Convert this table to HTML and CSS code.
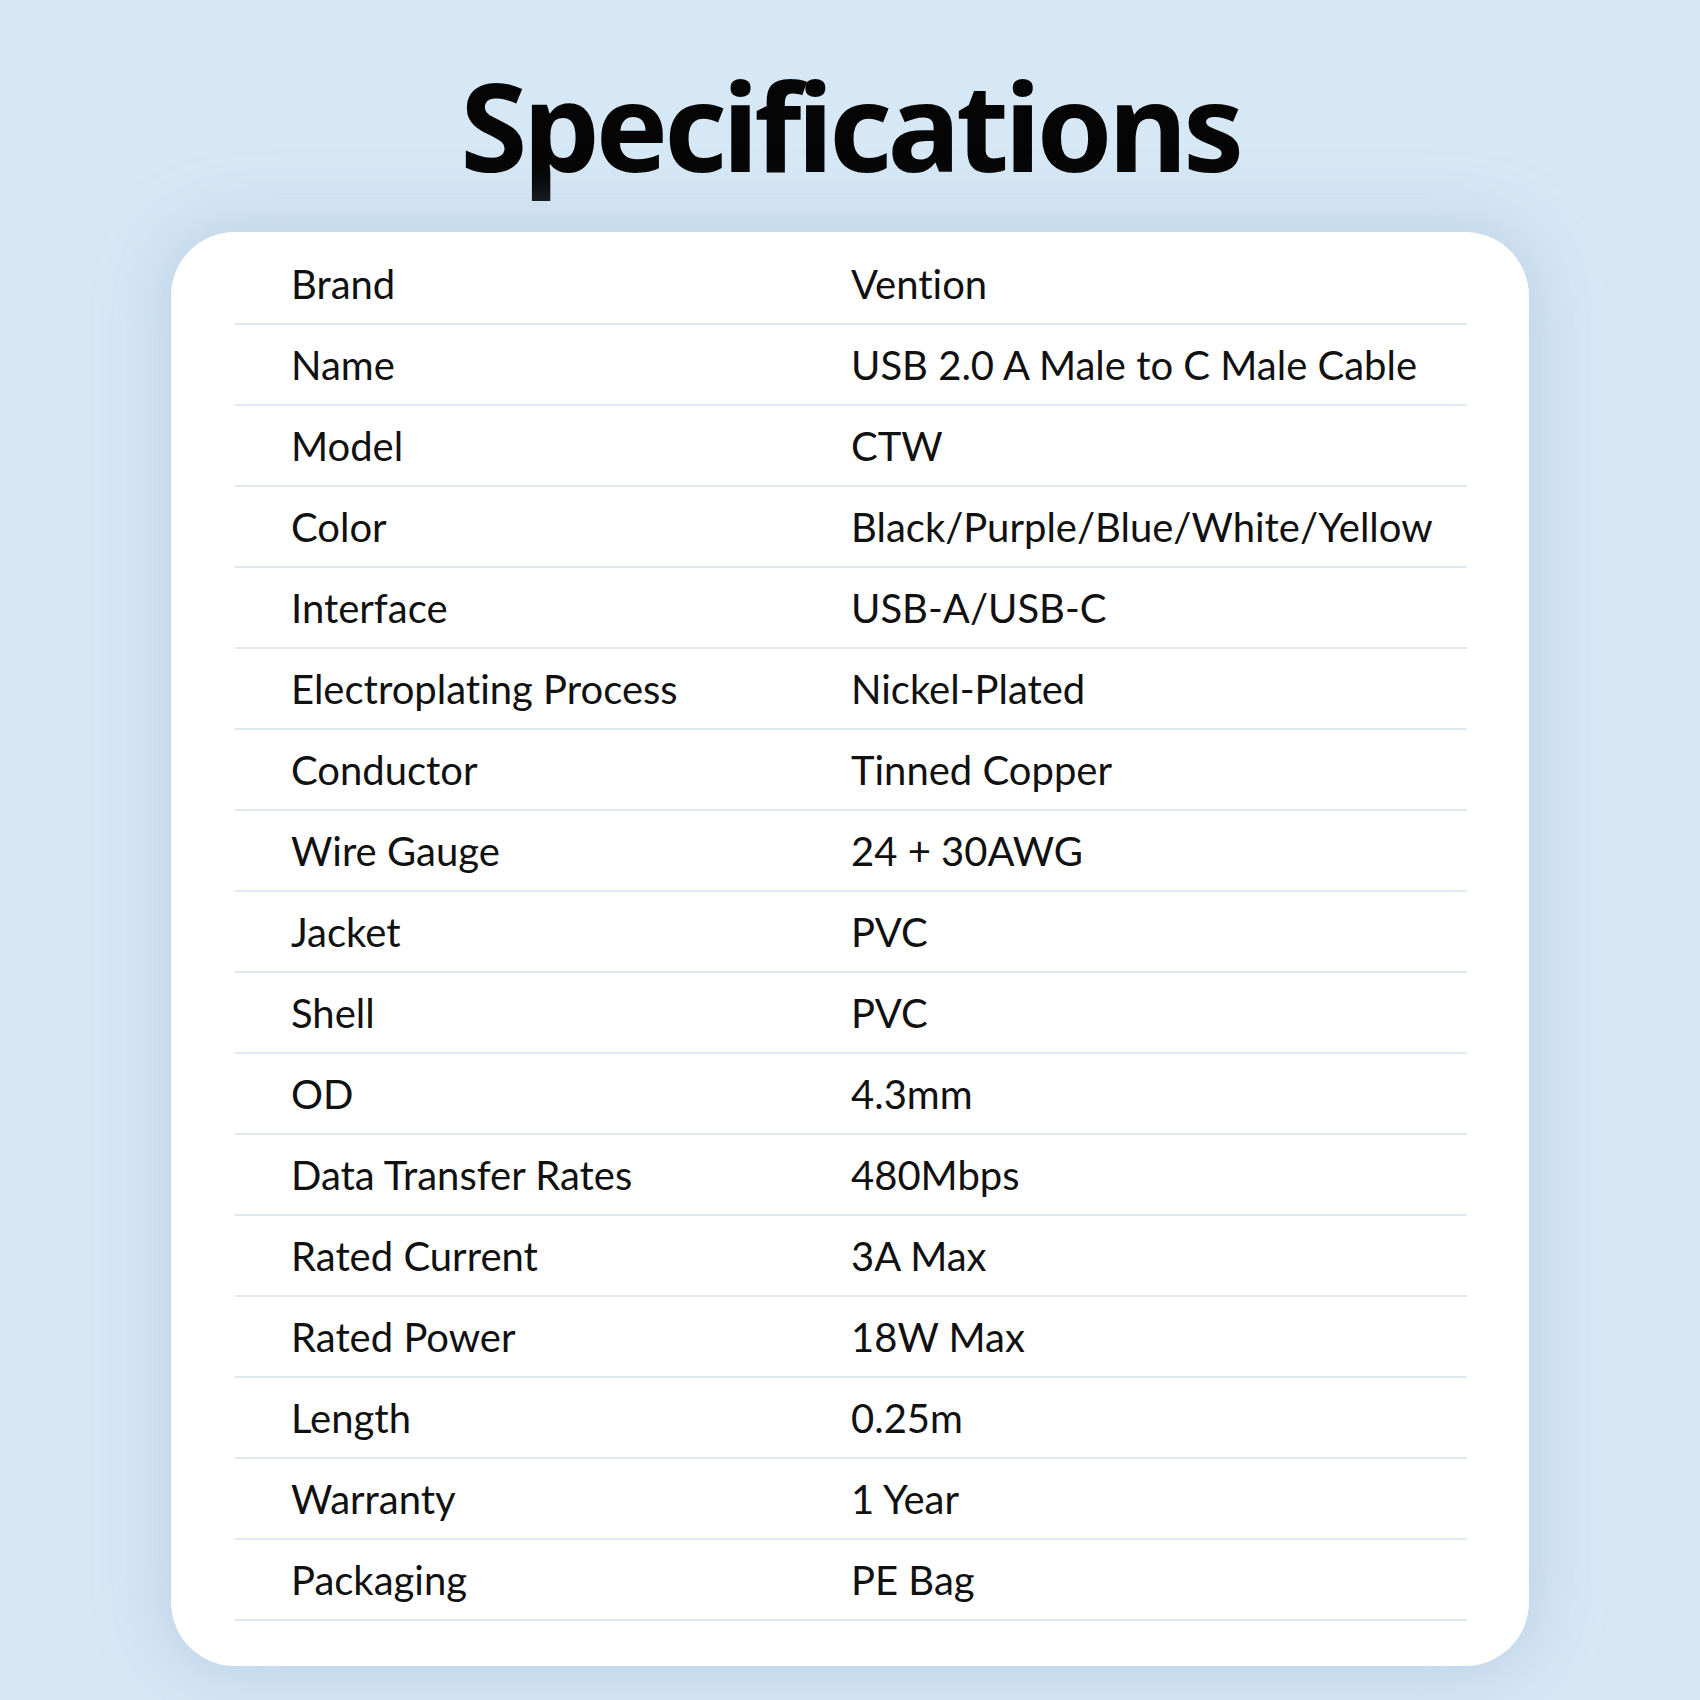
FILE: index.html
```html
<!DOCTYPE html>
<html lang="en">
<head>
<meta charset="utf-8">
<title>Specifications</title>
<link rel="stylesheet" href="styles.css">
</head>
<body>
<main class="page">
  <h1 class="title">Specifications</h1>
  <section class="card">
    <div class="row"><span class="label">Brand</span><span class="value">Vention</span></div>
    <div class="row"><span class="label">Name</span><span class="value">USB 2.0 A Male to C Male Cable</span></div>
    <div class="row"><span class="label">Model</span><span class="value">CTW</span></div>
    <div class="row"><span class="label">Color</span><span class="value">Black/Purple/Blue/White/Yellow</span></div>
    <div class="row"><span class="label">Interface</span><span class="value">USB-A/USB-C</span></div>
    <div class="row"><span class="label">Electroplating Process</span><span class="value">Nickel-Plated</span></div>
    <div class="row"><span class="label">Conductor</span><span class="value">Tinned Copper</span></div>
    <div class="row"><span class="label">Wire Gauge</span><span class="value">24 + 30AWG</span></div>
    <div class="row"><span class="label">Jacket</span><span class="value">PVC</span></div>
    <div class="row"><span class="label">Shell</span><span class="value">PVC</span></div>
    <div class="row"><span class="label">OD</span><span class="value">4.3mm</span></div>
    <div class="row"><span class="label">Data Transfer Rates</span><span class="value">480Mbps</span></div>
    <div class="row"><span class="label">Rated Current</span><span class="value">3A Max</span></div>
    <div class="row"><span class="label">Rated Power</span><span class="value">18W Max</span></div>
    <div class="row"><span class="label">Length</span><span class="value">0.25m</span></div>
    <div class="row"><span class="label">Warranty</span><span class="value">1 Year</span></div>
    <div class="row"><span class="label">Packaging</span><span class="value">PE Bag</span></div>
  </section>
</main>
</body>
</html>
```
FILE: styles.css
```css
html, body {
  margin: 0;
  padding: 0;
}
body {
  width: 1700px;
  height: 1700px;
  background: #d6e7f5;
  font-family: "Lato", "Roboto", sans-serif;
  font-variant-ligatures: none;
  font-feature-settings: "liga" 0, "clig" 0, "dlig" 0;
  color: #111;
  overflow: hidden;
}
.page {
  display: flex;
  flex-direction: column;
  align-items: center;
  padding-top: 64px;
}
.title {
  margin: 0;
  font-family: "Noto Sans", sans-serif;
  font-weight: 700;
  font-size: 122px;
  line-height: 1;
  letter-spacing: -4.5px;
  font-variant-ligatures: none;
  font-feature-settings: "liga" 0, "clig" 0, "dlig" 0;
  color: #050505;
  height: 168px;
}
.card {
  width: 1358px;
  box-sizing: border-box;
  background: #ffffff;
  border-radius: 64px;
  padding: 12px 62px 45px 64px;
  box-shadow: 0 0 60px 10px rgba(170, 195, 220, 0.55);
  display: flex;
  flex-direction: column;
}
.row {
  height: 81px;
  box-sizing: border-box;
  border-bottom: 2px solid #dde8ef;
  display: grid;
  grid-template-columns: 560px 1fr;
  align-items: center;
  padding-left: 56px;
  font-size: 40px;
}
.label, .value {
  white-space: nowrap;
}
```
